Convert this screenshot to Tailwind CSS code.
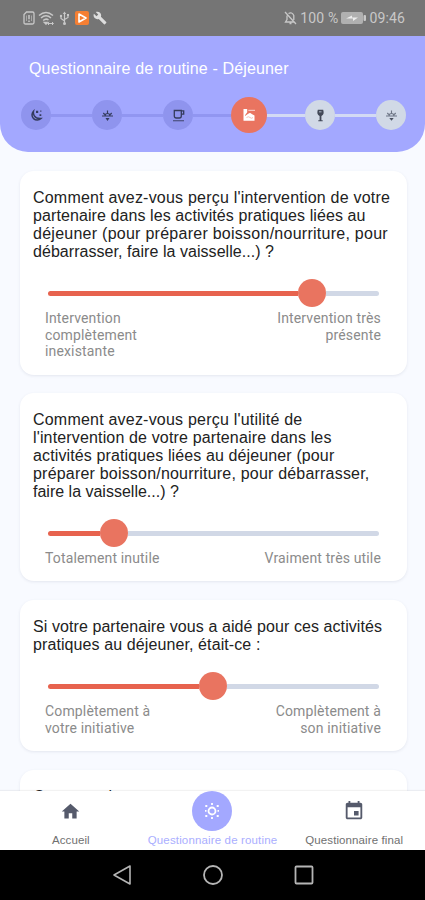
<!DOCTYPE html>
<html lang="fr">
<head>
<meta charset="utf-8">
<title>Questionnaire de routine</title>
<script src="https://cdn.jsdelivr.net/npm/@tailwindcss/browser@4"></script>
</head>
<body class="w-[425px] h-[900px] overflow-hidden bg-[#f8faff] flex flex-col font-['Liberation_Sans',Arial,sans-serif]">

<!-- Status bar -->
<div class="h-[36px] shrink-0 bg-[#757575] flex items-center justify-between pl-[23px] pr-[20px] text-[#c8c8c8]">
  <div class="flex items-center">
    <svg class="w-[12px] h-[14px]" viewBox="0 0 12 14" fill="none" stroke="currentColor" stroke-width="1.3"><path d="M3.500 1h6q1.500 0 1.500 1.500v9q0 1.500-1.500 1.500h-7Q1 13 1 11.500V3.500z"/><path d="M6 4v4.200M6 9.500v1.500" stroke-width="1.500"/><path d="M3.500 4.500v5.500M8.500 4.500v5.500" stroke-width=".6"/></svg>
    <svg class="w-[17px] h-[15px] ml-[3px]" viewBox="0 0 17 15" fill="none" stroke="currentColor" stroke-width="1.500"><path d="M1 4.500Q8 -1.500 15 4.500M3 7Q8 2.500 13 7M5.200 9.500Q8 7 10.500 9"/><path d="M6.500 11.500L8 13l1-1.500z" fill="currentColor"/><path d="M10 12.500h5M11 10.800l-1.500 1.700L11 14M14 11l1.500 1.500L14 14" stroke-width="1"/></svg>
    <svg class="w-[11px] h-[15px] ml-[4px]" viewBox="0 0 11 15" fill="none" stroke="currentColor" stroke-width="1.200"><path d="M5.500 2v10M5.500 10L2 7.500V5M5.500 8.500L9 6.500V4"/><path d="M3.800 3L5.500.5 7.200 3z" fill="currentColor" stroke="none"/><circle cx="5.500" cy="12.500" r="1.500" fill="currentColor" stroke="none"/><circle cx="2" cy="5" r="1.200" fill="currentColor" stroke="none"/><path d="M8 3h2v2H8z" fill="currentColor" stroke="none"/></svg>
    <svg class="w-[14px] h-[14px] ml-[5px]" viewBox="0 0 14 14"><rect width="14" height="14" rx="2" fill="#f57f33"/><path d="M4 3l7 4-7 4z" fill="none" stroke="#fff" stroke-width="1.600" stroke-linejoin="round"/></svg>
    <svg class="w-[14px] h-[14px] ml-[4px]" viewBox="0 0 24 24" fill="#dedede"><path d="M22.700 19l-9.100-9.100c.9-2.300.4-5-1.500-6.900-2-2-5-2.400-7.400-1.300L9 6 6 9 1.600 4.700C.4 7.100.9 10.100 2.900 12.100c1.900 1.900 4.600 2.400 6.900 1.500l9.100 9.100c.4.400 1 .4 1.400 0l2.300-2.300c.5-.4.5-1.100.1-1.400z"/></svg>
  </div>
  <div class="flex items-center text-[14px] tracking-[0.15px] font-[Roboto,sans-serif]">
    <svg class="w-[13px] h-[14px]" viewBox="0 0 13 14" fill="none" stroke="currentColor" stroke-width="1.300"><path d="M1 1l11 12M3 4.500v4L1.500 11H10M4.500 2.500Q8 .5 9.800 4.500V9M5.500 12.500h2"/></svg>
    <span class="ml-[3px] whitespace-nowrap">100 %</span>
    <svg class="w-[25px] h-[12px] ml-[3px]" viewBox="0 0 25 12"><rect x="0" y="0" width="22" height="12" rx="2" fill="#b0b0b0"/><rect x="22.500" y="3" width="2.500" height="6" rx="1" fill="#c8c8c8"/><path d="M5 6.500l6-3v2h6l-5 3.500V6.500z" fill="#ededed"/></svg>
    <span class="ml-[3px]">09:46</span>
  </div>
</div>

<!-- Header with routine stepper -->
<header class="h-[116px] shrink-0 bg-[#a3a8ff] rounded-b-[28px] pt-[23px]">
  <h1 class="pl-[29px] h-[20px] leading-[20px] text-[16px] tracking-[0.15px] text-white whitespace-nowrap">Questionnaire de routine - Déjeuner</h1>
  <div class="flex items-center h-[36px] mt-[18px] pl-[21px]">
    <div class="size-[30px] shrink-0 rounded-full bg-[#8f94ee] flex items-center justify-center">
      <svg class="size-[13px]" viewBox="0 0 13 13" fill="none" stroke="#343b5c" stroke-width="1.500"><path d="M3.500 2.200A5 5 0 1 0 11 9.500Q6 9.800 4.300 6.800 3 4.500 3.500 2.200z"/><path d="M6 1.800h2.200V4H6zM9.500 5.200h1.800V7H9.500zM10.200 1.500h1.200v1.200h-1.200z" fill="#343b5c" stroke="none"/></svg>
    </div>
    <div class="h-[3px] w-[41px] bg-[#9196f1]"></div>
    <div class="size-[30px] shrink-0 rounded-full bg-[#8f94ee] flex items-center justify-center">
      <svg class="size-[13px]" viewBox="0 0 13 13" fill="none" stroke="#343b5c" stroke-width="1.200"><path d="M1 7h11M6.500 1.500v3M2.300 4l1.400 1.500M10.700 4L9.300 5.500M4 7q0-2.500 2.500-2.500T9 7"/><path d="M4.500 9h4L6.500 12z" fill="#343b5c" stroke="none"/></svg>
    </div>
    <div class="h-[3px] w-[41px] bg-[#9196f1]"></div>
    <div class="size-[30px] shrink-0 rounded-full bg-[#8f94ee] flex items-center justify-center">
      <svg class="size-[13px]" viewBox="0 0 13 13" fill="none" stroke="#343b5c" stroke-width="1.300"><path d="M2.300 1.500h7v5.500q0 2-2 2h-3q-2 0-2-2zM9.300 1.800h2.400v3.400H9.300"/><path d="M1 11.700h11" stroke-opacity=".7"/></svg>
    </div>
    <div class="h-[3px] w-[38px] bg-[#9196f1]"></div>
    <div class="size-[36px] shrink-0 rounded-full bg-[#e97460] flex items-center justify-center">
      <svg class="size-[14px]" viewBox="0 0 14 14" fill="#fff"><path d="M1.500 1h3.700v3.200L3 7.200v.8l3.200-2.300q2-1.800 3.500.4l2.800 1.400v5.200h-11z"/><path d="M4.500 9.500q2-1.500 3.500 0t3 0" fill="none" stroke="#f3b0a5" stroke-width=".8"/><path d="M6.300 1.800H13v1.100H6.300z" opacity=".65"/></svg>
    </div>
    <div class="h-[3px] w-[38px] bg-[#d3daf4]"></div>
    <div class="size-[30px] shrink-0 rounded-full bg-[#d1d9e6] flex items-center justify-center">
      <svg class="size-[13px]" viewBox="0 0 13 13"><path d="M3.800.8h5.400q1.500 5-1.800 6.200v4.200h1.300v1H4.300v-1h1.300V7Q2.300 5.800 3.800.8z" fill="#424857"/><path d="M5 2h2.500v1.500H5z" fill="#8a92a3"/></svg>
    </div>
    <div class="h-[3px] w-[41px] bg-[#d3daf4]"></div>
    <div class="size-[30px] shrink-0 rounded-full bg-[#d1d9e6] flex items-center justify-center">
      <svg class="size-[13px]" viewBox="0 0 13 13" fill="none" stroke="#6d7585" stroke-width="1.100"><path d="M1 7h11M6.500 1.500v3M2.300 4l1.400 1.500M10.700 4L9.300 5.500M4 7q0-2.500 2.500-2.500T9 7"/><path d="M4.300 9h4.400L6.500 11.800z" fill="#4a5160" stroke="none"/></svg>
    </div>
  </div>
</header>

<!-- Questions -->
<main class="h-[639px] shrink-0 overflow-hidden pt-[19px] pl-[20px] pr-[18px] flex flex-col">
  <section class="h-[204px] shrink-0 rounded-[14px] bg-white shadow-[0_1px_3px_rgba(60,70,110,0.11)] pt-[18px] px-[13px]">
    <p class="text-[16px] leading-[18px] text-[#222] whitespace-nowrap"><span class="tracking-[0.21px]">Comment avez-vous perçu l'intervention de votre</span><br><span class="tracking-[0.09px]">partenaire dans les activités pratiques liées au</span><br><span class="tracking-[0.26px]">déjeuner (pour préparer boisson/nourriture, pour</span><br><span class="tracking-[0.05px]">débarrasser, faire la vaisselle...) ?</span></p>
    <div class="mt-[18px] mx-[15px] h-[28px] flex items-center">
      <div class="w-[250px] h-[5px] rounded-l-full bg-[#e7634e]"></div>
      <div class="size-[28px] rounded-full bg-[#e97460]"></div>
      <div class="flex-1 h-[5px] rounded-r-full bg-[#d1d8e6]"></div>
    </div>
    <div class="mt-[3px] ml-[12px] mr-[13px] flex justify-between font-[Roboto,sans-serif] text-[14px] leading-[16.500px] tracking-[0.15px] text-[#8b8b8b] whitespace-nowrap">
      <div>Intervention<br>complètement<br>inexistante</div>
      <div class="text-right">Intervention très<br>présente</div>
    </div>
  </section>

  <section class="mt-[18px] h-[188px] shrink-0 rounded-[14px] bg-white shadow-[0_1px_3px_rgba(60,70,110,0.11)] pt-[18px] px-[13px]">
    <p class="text-[16px] leading-[18px] text-[#222] whitespace-nowrap"><span class="tracking-[0.21px]">Comment avez-vous perçu l'utilité de</span><br><span class="tracking-[0.15px]">l'intervention de votre partenaire dans les</span><br><span class="tracking-[0.12px]">activités pratiques liées au déjeuner (pour</span><br><span class="tracking-[0.2px]">préparer boisson/nourriture, pour débarrasser,</span><br>faire la vaisselle...) ?</p>
    <div class="mt-[18px] mx-[15px] h-[28px] flex items-center">
      <div class="w-[52px] h-[5px] rounded-l-full bg-[#e7634e]"></div>
      <div class="size-[28px] rounded-full bg-[#e97460]"></div>
      <div class="flex-1 h-[5px] rounded-r-full bg-[#d1d8e6]"></div>
    </div>
    <div class="mt-[3px] ml-[12px] mr-[13px] flex justify-between font-[Roboto,sans-serif] text-[14px] leading-[16.500px] tracking-[0.15px] text-[#8b8b8b] whitespace-nowrap">
      <div>Totalement inutile</div>
      <div class="text-right">Vraiment très utile</div>
    </div>
  </section>

  <section class="mt-[19px] h-[151px] shrink-0 rounded-[14px] bg-white shadow-[0_1px_3px_rgba(60,70,110,0.11)] pt-[18px] px-[13px]">
    <p class="text-[16px] leading-[18px] text-[#222] whitespace-nowrap"><span class="tracking-[0.08px]">Si votre partenaire vous a aidé pour ces activités</span><br><span class="tracking-[0.1px]">pratiques au déjeuner, était-ce :</span></p>
    <div class="mt-[18px] mx-[15px] h-[28px] flex items-center">
      <div class="w-[151px] h-[5px] rounded-l-full bg-[#e7634e]"></div>
      <div class="size-[28px] rounded-full bg-[#e97460]"></div>
      <div class="flex-1 h-[5px] rounded-r-full bg-[#d1d8e6]"></div>
    </div>
    <div class="mt-[3px] ml-[12px] mr-[13px] flex justify-between font-[Roboto,sans-serif] text-[14px] leading-[16.500px] tracking-[0.15px] text-[#8b8b8b] whitespace-nowrap">
      <div>Complètement à<br>votre initiative</div>
      <div class="text-right">Complètement à<br>son initiative</div>
    </div>
  </section>

  <!-- Continues below the bottom navigation -->
  <section class="mt-[19px] h-[151px] shrink-0 rounded-[14px] bg-white shadow-[0_1px_3px_rgba(60,70,110,0.11)] pt-[18px] px-[13px]">
    <p class="text-[16px] leading-[18px] tracking-[0.2px] text-[#222] whitespace-nowrap">Comment le repas</p>
  </section>
</main>

<!-- Bottom navigation -->
<nav class="h-[59px] shrink-0 bg-white shadow-[0_-1px_1px_rgba(0,0,0,0.05)] grid grid-cols-3 text-[11.500px] leading-[12px] tracking-[0.1px] text-[#707070] whitespace-nowrap">
  <div class="flex flex-col items-center">
    <div class="h-[40px] flex items-center"><svg class="size-[21px]" viewBox="0 0 24 24" fill="#555a6b"><path d="M10 20v-6h4v6h5v-8h3L12 3 2 12h3v8z"/></svg></div>
    <span class="mt-[3px]">Accueil</span>
  </div>
  <div class="flex flex-col items-center text-[#aaaeff]">
    <div class="size-[40px] rounded-full bg-[#a3a8ff] flex items-center justify-center">
      <svg class="size-[18px]" viewBox="0 0 18 18" fill="none" stroke="#fff" stroke-width="1.800"><circle cx="9" cy="9" r="3.500"/><path d="M9 1v2M9 15v2M2 8.900h1.500M14.500 8.900H16M2.300 4h2M13.700 4h2M2.300 14h2M13.700 14h2"/></svg>
    </div>
    <span class="mt-[3px] tracking-[0.15px]">Questionnaire de routine</span>
  </div>
  <div class="flex flex-col items-center">
    <div class="h-[40px] flex items-center"><svg class="w-[22px] h-[22px]" viewBox="0 0 24 24" fill="#555a6b"><path d="M17 12h-5v5h5v-5zM16 1v2H8V1H6v2H5c-1.110 0-1.990.9-1.990 2L3 19c0 1.100.89 2 2 2h14c1.100 0 2-.9 2-2V5c0-1.100-.9-2-2-2h-1V1h-2zm3 18H5V8h14v11z"/></svg></div>
    <span class="mt-[3px]">Questionnaire final</span>
  </div>
</nav>

<!-- System navigation -->
<div class="h-[50px] shrink-0 bg-black flex items-center justify-center gap-[71px]">
  <svg class="size-[20px]" viewBox="0 0 20 20" fill="none" stroke="#b5b5b5" stroke-width="1.600" stroke-linejoin="round"><path d="M18 1v18L2 10z"/></svg>
  <svg class="size-[20px]" viewBox="0 0 20 20" fill="none" stroke="#b5b5b5" stroke-width="1.800"><circle cx="10" cy="10" r="9"/></svg>
  <svg class="size-[20px]" viewBox="0 0 20 20" fill="none" stroke="#b5b5b5" stroke-width="1.800"><rect x="1.500" y="1.500" width="17" height="17" rx="1"/></svg>
</div>
</body>
</html>
